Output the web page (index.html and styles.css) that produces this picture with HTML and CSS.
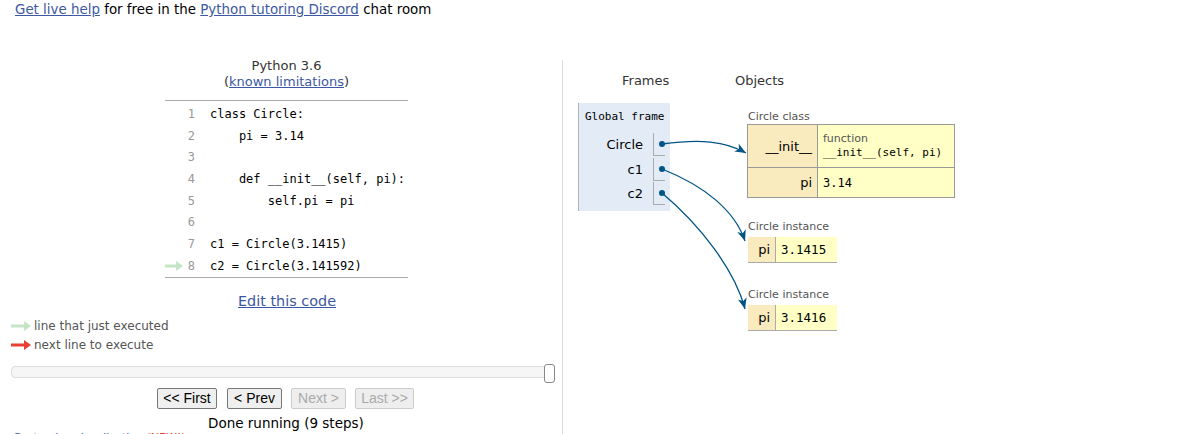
FILE: index.html
```html
<!DOCTYPE html>
<html>
<head>
<meta charset="utf-8">
<link rel="stylesheet" href="styles.css">
</head>
<body>
<div class="top"><a href="#">Get live help</a> for free in the <a href="#">Python tutoring Discord</a> chat room</div>
<div class="main">
  <div class="left">
    <div class="code-panel">
      <div class="lang">Python 3.6<br>(<a href="#">known limitations</a>)</div>
      <div class="code">
        <div class="row"><span class="arr"></span><span class="ln">1</span><span class="src">class Circle:</span></div>
        <div class="row"><span class="arr"></span><span class="ln">2</span><span class="src">    pi = 3.14</span></div>
        <div class="row"><span class="arr"></span><span class="ln">3</span><span class="src"></span></div>
        <div class="row"><span class="arr"></span><span class="ln">4</span><span class="src">    def __init__(self, pi):</span></div>
        <div class="row"><span class="arr"></span><span class="ln">5</span><span class="src">        self.pi = pi</span></div>
        <div class="row"><span class="arr"></span><span class="ln">6</span><span class="src"></span></div>
        <div class="row"><span class="arr"></span><span class="ln">7</span><span class="src">c1 = Circle(3.1415)</span></div>
        <div class="row"><span class="arr"><svg width="18" height="10" viewBox="0 0 18 10"><path d="M0 3.5 H11 V0 L18 5 L11 10 V6.5 H0 Z" fill="#c5e5c5"/></svg></span><span class="ln">8</span><span class="src">c2 = Circle(3.141592)</span></div>
      </div>
    </div>
    <div class="edit"><a href="#">Edit this code</a></div>
    <div class="legend">
      <div class="leg"><svg width="20" height="10" viewBox="0 0 20 10"><path d="M0 3.5 H13 V0 L20 5 L13 10 V6.5 H0 Z" fill="#c5e5c5"/></svg><span>line that just executed</span></div>
      <div class="leg"><svg width="20" height="10" viewBox="0 0 20 10"><path d="M0 3.5 H13 V0 L20 5 L13 10 V6.5 H0 Z" fill="#e93f34"/></svg><span>next line to execute</span></div>
    </div>
    <div class="slider"><div class="handle"></div></div>
    <div class="buttons">
      <button class="btn w1">&lt;&lt; First</button>
      <button class="btn w2">&lt; Prev</button>
      <button class="btn w2 dis">Next &gt;</button>
      <button class="btn w3 dis">Last &gt;&gt;</button>
    </div>
    <div class="done">Done running (9 steps)</div>
    <div class="customize"><a href="#">Customize visualization</a> <span class="new">(NEW!)</span></div>
  </div>
  <div class="right">
    <div class="heads"><span class="h-frames">Frames</span><span>Objects</span></div>
    <div class="viz">
      <div class="frames-col">
        <div class="frame">
          <div class="fname">Global frame</div>
          <div class="var"><span class="vname">Circle</span><span class="vcell"><span class="dot"></span></span></div>
          <div class="var"><span class="vname">c1</span><span class="vcell"><span class="dot"></span></span></div>
          <div class="var"><span class="vname">c2</span><span class="vcell"><span class="dot"></span></span></div>
        </div>
      </div>
      <div class="objects-col">
        <div class="obj">
          <div class="olabel">Circle class</div>
          <table class="cls">
            <tr class="r1"><td class="k">__init__</td><td class="v"><div class="ftype">function</div><div class="mono">__init__(self, pi)</div></td></tr>
            <tr class="r2"><td class="k">pi</td><td class="v"><span class="mono n">3.14</span></td></tr>
          </table>
        </div>
        <div class="obj inst">
          <div class="olabel">Circle instance</div>
          <div class="ibox"><span class="ik">pi</span><span class="iv">3.1415</span></div>
        </div>
        <div class="obj inst2">
          <div class="olabel">Circle instance</div>
          <div class="ibox"><span class="ik">pi</span><span class="iv">3.1416</span></div>
        </div>
      </div>
    </div>
  </div>
</div>
<svg class="arrows" width="1199" height="434" viewBox="0 0 1199 434">
  <defs>
    <marker id="ah" markerUnits="userSpaceOnUse" markerWidth="12" markerHeight="10" refX="11" refY="4.5" orient="auto">
      <path d="M0 0 L11 4.5 L0 9 L3 4.5 Z" fill="#005583"/>
    </marker>
  </defs>
  <g fill="none" stroke="#005583" stroke-width="1.3">
    <path d="M662 144 C700 139 725 141 746 153" marker-end="url(#ah)"/>
    <path d="M662 169 C705 186 735 211 745 241" marker-end="url(#ah)"/>
    <path d="M662 193 C700 225 735 270 745 309" marker-end="url(#ah)"/>
  </g>
</svg>
</body>
</html>
```
FILE: styles.css
```css
html, body {
  margin: 0;
  padding: 0;
  background: #fff;
}
body {
  position: relative;
  width: 1199px;
  height: 434px;
  overflow: hidden;
  font-family: "DejaVu Sans", Verdana, sans-serif;
  font-size: 13px;
  color: #000;
}
a {
  color: #3d58a2;
  text-decoration: underline;
}
.top {
  padding: 2px 0 0 15px;
  line-height: 16px;
  font-size: 13.4px;
}
.main {
  display: flex;
  margin-top: 40px;
}
.left {
  width: 562px;
  display: flex;
  flex-direction: column;
}
.code-panel {
  margin-left: 165px;
  width: 243px;
}
.lang {
  text-align: center;
  line-height: 16px;
  color: #333;
}
.code {
  margin-top: 10px;
  border-top: 1px solid #aaa;
  border-bottom: 1px solid #aaa;
  padding: 2px 0 0;
  font-family: "DejaVu Sans Mono", monospace;
  font-size: 12px;
}
.row {
  height: 21.7px;
  display: flex;
  align-items: center;
}
.arr {
  width: 19px;
  height: 10px;
  display: flex;
}
.ln {
  width: 11px;
  text-align: right;
  color: #999;
}
.src {
  margin-left: 15px;
  white-space: pre;
}
.edit {
  text-align: center;
  margin-top: 14px;
  margin-left: 12px;
  font-size: 14.4px;
  line-height: 18px;
}
.legend {
  margin: 7px 0 0 11px;
  color: #555;
  font-size: 12px;
}
.leg {
  display: flex;
  align-items: center;
  height: 19px;
  gap: 3px;
}
.slider {
  position: relative;
  margin: 11px 0 0 11px;
  width: 540px;
  height: 10px;
  border: 1px solid #ddd;
  border-radius: 4px;
  background: #f6f6f6;
}
.handle {
  position: absolute;
  right: -3px;
  top: -3px;
  width: 9px;
  height: 17px;
  border: 1px solid #888;
  border-radius: 3px;
  background: #fff;
}
.buttons {
  display: flex;
  margin: 10px 0 0 157px;
  gap: 9px;
}
.btn {
  font-family: "Liberation Sans", Arial, sans-serif;
  font-size: 14px;
  height: 21px;
  padding: 0;
  border: 1px solid #777;
  border-radius: 2px;
  background: #efefef;
  color: #000;
  line-height: 19px;
}
.w1 { width: 60px; margin-right: 1px; }
.w2 { width: 55px; }
.w3 { width: 59px; }
.btn.dis {
  border-color: #ccc;
  color: #aaa;
  background: #eee;
}
.done {
  margin: 6px 0 0 208px;
  font-size: 13.5px;
  line-height: 16px;
}
.customize {
  margin: 0 0 0 13px;
  font-size: 11px;
  line-height: 13px;
}
.new {
  color: #e93f34;
}
.right {
  flex: 1;
  margin-top: 2px;
  height: 380px;
  border-left: 1px solid #ddd;
  padding-left: 15px;
}
.heads {
  display: flex;
  padding-top: 13px;
  line-height: 16px;
  color: #333;
}
.h-frames {
  margin-left: 44px;
  width: 113px;
}
.viz {
  display: flex;
  align-items: flex-start;
  margin-top: 14px;
}
.frames-col {
  width: 92px;
}
.frame {
  background: #e2ebf6;
  border-left: 1px solid #a6b3c0;
  padding: 7px 0 4px;
}
.fname {
  font-family: "DejaVu Sans Mono", monospace;
  font-size: 11px;
  line-height: 14px;
  padding-left: 6px;
  margin-bottom: 9px;
}
.var {
  display: flex;
  height: 23px;
  margin-bottom: 1.5px;
}
.vname {
  width: 64px;
  text-align: right;
  line-height: 23px;
}
.vcell {
  margin-left: 10px;
  width: 11px;
  height: 22px;
  border-left: 1px solid #aaa;
  border-bottom: 1px solid #aaa;
  display: flex;
  align-items: center;
}
.dot {
  margin-left: 5px;
  width: 6px;
  height: 6px;
  border-radius: 50%;
  background: #005583;
}
.objects-col {
  margin-left: 77px;
}
.olabel {
  font-size: 11px;
  line-height: 14px;
  color: #555;
  padding-left: 1px;
}
.obj {
  margin-top: 7px;
}
.cls {
  border-collapse: collapse;
  margin-top: 0;
  border: 1px solid #999;
}
.cls td {
  border: 1px solid #999;
  padding: 0;
  vertical-align: middle;
}
.cls .k {
  width: 64px;
  background: #faebbf;
  text-align: right;
  padding-right: 5px;
}
.cls .v {
  width: 131px;
  background: #ffffc6;
  padding-left: 5px;
}
.r1 { height: 43px; }
.r2 { height: 30px; }
.ftype {
  font-size: 11px;
  color: #555;
  line-height: 13px;
}
.mono {
  font-family: "DejaVu Sans Mono", monospace;
  font-size: 11px;
  line-height: 16px;
}
.mono.n {
  font-size: 12px;
}
.inst {
  margin-top: 22px;
}
.inst2 {
  margin-top: 25px;
}
.ibox {
  display: flex;
  margin-top: 3px;
  height: 26px;
  margin-left: 1px;
}
.ik {
  width: 22px;
  padding-right: 5px;
  text-align: right;
  background: #faebbf;
  border-bottom: 1px solid #aaa;
  line-height: 25px;
}
.iv {
  width: 56px;
  padding-left: 5px;
  background: #ffffc6;
  border-left: 1px solid #aaa;
  border-bottom: 1px solid #aaa;
  font-family: "DejaVu Sans Mono", monospace;
  font-size: 12.5px;
  line-height: 25px;
}
.arrows {
  position: absolute;
  left: 0;
  top: 0;
  pointer-events: none;
}
```
